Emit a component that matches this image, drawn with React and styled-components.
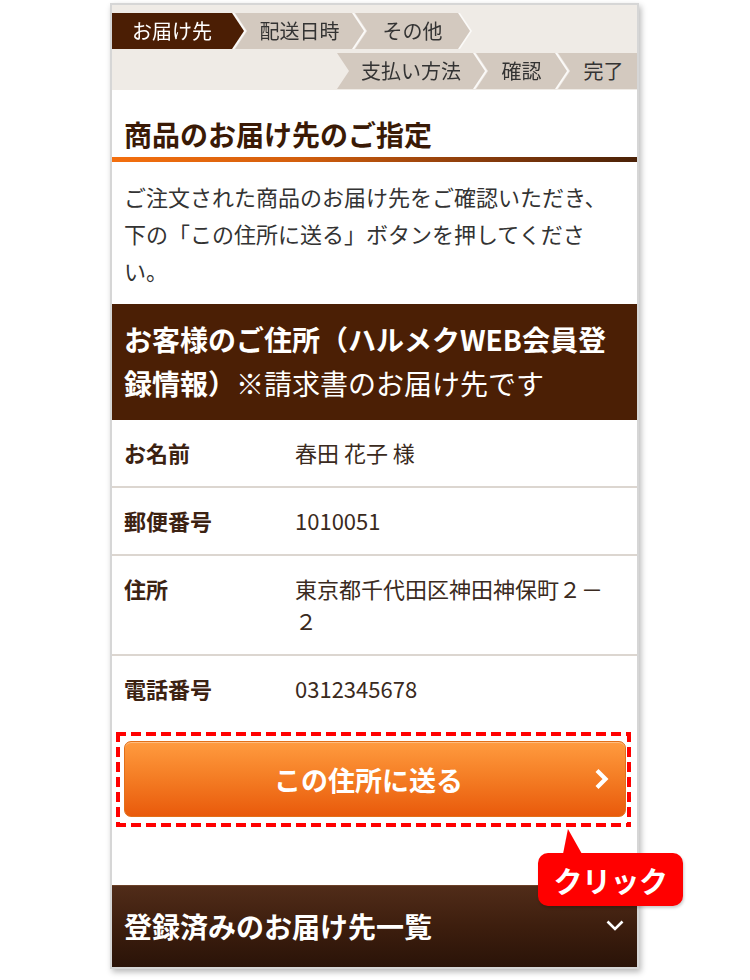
import React from 'react';
import styled, { createGlobalStyle } from 'styled-components';

const Global = createGlobalStyle`
  html, body { margin: 0; padding: 0; background: #fff; }
  body {
    font-family: "Noto Sans CJK JP", "Noto Sans", sans-serif;
    text-spacing-trim: space-all;
  }
  * { box-sizing: border-box; }
`;

const Page = styled.div`
  padding: 3px 0 10px 110px;
`;

const Frame = styled.div`
  position: relative;
  width: 529px;
  border: 2px solid #d6d6d6;
  background: #fff;
  box-shadow: 2px 3px 6px rgba(0, 0, 0, 0.28);
`;

const Steps = styled.nav`
  background: #efebe6;
  padding: 8px 0 1px;
  display: flex;
  flex-direction: column;
  gap: 4px;
`;

const StepRow = styled.div`
  display: flex;
  justify-content: ${(p) => (p.$end ? 'flex-end' : 'flex-start')};
`;

const StepWrap = styled.div`
  filter: ${(p) => (p.$last ? 'none' : 'drop-shadow(2px 0 0 #fbfaf8)')};
  & + & { margin-left: -9px; }
`;

const clipFor = (first, last) => {
  if (first) return 'polygon(0 0, calc(100% - 12px) 0, 100% 50%, calc(100% - 12px) 100%, 0 100%)';
  if (last) return 'polygon(0 0, 100% 0, 100% 100%, 0 100%, 12px 50%)';
  return 'polygon(0 0, calc(100% - 12px) 0, 100% 50%, calc(100% - 12px) 100%, 0 100%, 12px 50%)';
};

const Step = styled.div`
  width: ${(p) => p.$w}px;
  height: 36px;
  display: flex;
  align-items: center;
  justify-content: center;
  padding-left: ${(p) => (p.$first ? 0 : 12)}px;
  padding-right: ${(p) => (p.$last ? 0 : 12)}px;
  font-size: 20px;
  line-height: 1;
  color: ${(p) => (p.$active ? '#fff' : '#333')};
  background: ${(p) => (p.$active ? '#4b1e04' : '#d3c9bf')};
  clip-path: ${(p) => clipFor(p.$first, p.$last)};
`;

const Title = styled.h1`
  margin: 0;
  padding: 24px 12px 3px;
  font-size: 28px;
  line-height: 40px;
  font-weight: 700;
  color: #3a1a06;
`;

const TitleBar = styled.div`
  height: 5px;
  background: linear-gradient(90deg, #f46f0e 0%, #d45f0d 35%, #8a3c0b 70%, #4a2107 100%);
`;

const Lead = styled.p`
  margin: 0;
  padding: 16px 12px 15px;
  font-size: 22px;
  line-height: 37px;
  color: #333;
`;

const SectionHead = styled.h2`
  margin: 0;
  padding: 13px 12px 15px;
  background: #4b1f05;
  color: #fff;
  font-size: 28px;
  line-height: 44px;
  font-weight: 700;
`;

const Note = styled.span`
  font-weight: 400;
`;

const Row = styled.div`
  display: grid;
  grid-template-columns: 171px 1fr;
  padding: 16px 20px 18px 12px;
  border-bottom: 2px solid #dcd6d0;
  font-size: 22px;
  line-height: 32px;
  &:last-child { border-bottom: none; }
`;

const Label = styled.div`
  font-weight: 700;
  color: #3c2212;
`;

const Value = styled.div`
  color: #3a2a20;
`;

const dashH = 'repeating-linear-gradient(90deg, #ff0000 0 10px, transparent 10px 15px)';
const dashV = 'repeating-linear-gradient(180deg, #ff0000 0 10px, transparent 10px 15px)';

const CallOut = styled.div`
  margin: 10px 6px 0 4px;
  padding: 9px 5px 10px 8px;
  background:
    ${dashH} left top / 100% 4px no-repeat,
    ${dashH} left bottom / 100% 4px no-repeat,
    ${dashV} left top / 4px 100% no-repeat,
    ${dashV} right top / 4px 100% no-repeat;
`;

const Cta = styled.button`
  width: 100%;
  height: 76px;
  display: flex;
  align-items: center;
  padding: 0;
  border: 1px solid #e27019;
  border-radius: 7px;
  background: linear-gradient(#ff9b3f 0%, #f57f26 45%, #e95a0b 100%);
  box-shadow: inset 0 1px 0 rgba(255, 255, 255, 0.35);
  color: #fff;
  font-family: "Noto Sans CJK JP", sans-serif;
  font-size: 27px;
  font-weight: 700;
  cursor: pointer;
`;

const CtaText = styled.span`
  flex: 1;
  padding-left: 18px;
  text-align: center;
`;

const CtaIcon = styled.svg`
  width: 15px;
  height: 24px;
  margin-right: 16px;
  flex: none;
`;

const Drawer = styled.div`
  margin-top: 58px;
  height: 82px;
  display: flex;
  align-items: center;
  justify-content: space-between;
  padding: 0 13px 2px 12px;
  background: linear-gradient(#512c19 0%, #3d1e0e 50%, #2a1308 100%);
  border-top: 1px solid #6b4128;
  color: #fff;
  font-size: 28px;
  font-weight: 700;
`;

const DrawerIcon = styled.svg`
  width: 18px;
  height: 11px;
`;

const Badge = styled.div`
  position: absolute;
  left: 426px;
  top: 848px;
  width: 145px;
  height: 53px;
  border-radius: 10px;
  background: #ff0000;
  color: #fff;
  display: flex;
  align-items: center;
  justify-content: center;
  font-size: 29px;
  font-weight: 700;
  letter-spacing: -0.5px;
  box-shadow: 1px 2px 3px rgba(0, 0, 0, 0.2);
  &::before {
    content: '';
    position: absolute;
    left: 25px;
    top: -24px;
    width: 19px;
    height: 25px;
    background: #ff0000;
    clip-path: polygon(26% 0, 100% 100%, 0 100%);
  }
`;

const row1 = [
  { t: 'お届け先', w: 132, active: true, first: true },
  { t: '配送日時', w: 129 },
  { t: 'その他', w: 115 },
];
const row2 = [
  { t: '支払い方法', w: 148 },
  { t: '確認', w: 91 },
  { t: '完了', w: 79, last: true },
];

const details = [
  ['お名前', '春田 花子 様'],
  ['郵便番号', '1010051'],
  ['住所', '東京都千代田区神田神保町２－２'],
  ['電話番号', '0312345678'],
];

export default function App() {
  return (
    <>
      <Global />
      <Page>
        <Frame>
          <Steps>
            <StepRow>
              {row1.map((s) => (
                <StepWrap key={s.t} $last={s.last}>
                  <Step $w={s.w} $active={s.active} $first={s.first} $last={s.last}>{s.t}</Step>
                </StepWrap>
              ))}
            </StepRow>
            <StepRow $end>
              {row2.map((s) => (
                <StepWrap key={s.t} $last={s.last}>
                  <Step $w={s.w} $active={s.active} $first={s.first} $last={s.last}>{s.t}</Step>
                </StepWrap>
              ))}
            </StepRow>
          </Steps>

          <Title>商品のお届け先のご指定</Title>
          <TitleBar />
          <Lead>ご注文された商品のお届け先をご確認いただき、下の「この住所に送る」ボタンを押してください。</Lead>

          <SectionHead>
            <span>お客様のご住所（ハルメクWEB会員登</span>
            <span>録情報）</span>
            <Note>※請求書のお届け先です</Note>
          </SectionHead>

          <div>
            {details.map(([k, v]) => (
              <Row key={k}>
                <Label>{k}</Label>
                <Value>{v}</Value>
              </Row>
            ))}
          </div>

          <CallOut>
            <Cta type="button">
              <CtaText>この住所に送る</CtaText>
              <CtaIcon viewBox="0 0 15 24">
                <polyline points="3,3.5 11.5,12 3,20.5" fill="none" stroke="#fff" strokeWidth="4.2" strokeLinejoin="miter" />
              </CtaIcon>
            </Cta>
          </CallOut>

          <Drawer>
            <span>登録済みのお届け先一覧</span>
            <DrawerIcon viewBox="0 0 18 11">
              <polyline points="1.5,1.5 9,9 16.5,1.5" fill="none" stroke="#fff" strokeWidth="2.6" />
            </DrawerIcon>
          </Drawer>

          <Badge>クリック</Badge>
        </Frame>
      </Page>
    </>
  );
}
